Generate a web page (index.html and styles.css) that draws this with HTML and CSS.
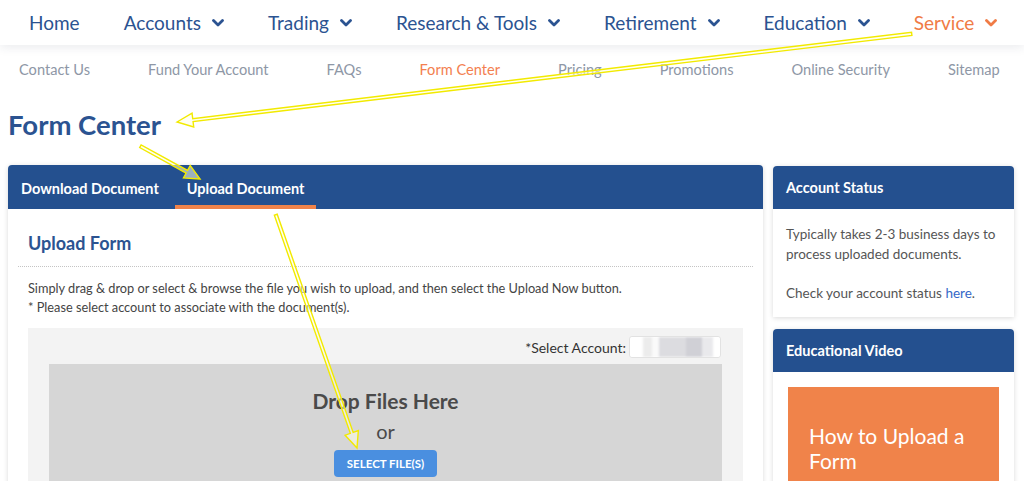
FILE: index.html
```html
<!DOCTYPE html>
<html lang="en">
<head>
    <meta charset="UTF-8">
    <meta name="viewport" content="width=device-width, initial-scale=1.0">
    <title>Form Center</title>
    <link rel="stylesheet" href="styles.css">
</head>
<body>

<header class="topnav">
    <ul>
        <li><a href="#">Home</a></li>
        <li><a href="#">Accounts <svg class="chev" viewBox="0 0 12 8"><path d="M1.5 1.5 6 6l4.5-4.5"/></svg></a></li>
        <li><a href="#">Trading <svg class="chev" viewBox="0 0 12 8"><path d="M1.5 1.5 6 6l4.5-4.5"/></svg></a></li>
        <li><a href="#">Research &amp; Tools <svg class="chev" viewBox="0 0 12 8"><path d="M1.5 1.5 6 6l4.5-4.5"/></svg></a></li>
        <li><a href="#">Retirement <svg class="chev" viewBox="0 0 12 8"><path d="M1.5 1.5 6 6l4.5-4.5"/></svg></a></li>
        <li><a href="#">Education <svg class="chev" viewBox="0 0 12 8"><path d="M1.5 1.5 6 6l4.5-4.5"/></svg></a></li>
        <li><a href="#" class="current">Service <svg class="chev" viewBox="0 0 12 8"><path d="M1.5 1.5 6 6l4.5-4.5"/></svg></a></li>
    </ul>
</header>

<nav class="subnav">
    <a href="#">Contact Us</a>
    <a href="#">Fund Your Account</a>
    <a href="#">FAQs</a>
    <a href="#" class="current">Form Center</a>
    <a href="#">Pricing</a>
    <a href="#">Promotions</a>
    <a href="#">Online Security</a>
    <a href="#">Sitemap</a>
</nav>

<main class="page">
    <h1 class="title">Form Center</h1>

    <div class="layout">
        <section class="panel">
            <div class="tabs">
                <a href="#" class="tab">Download Document</a>
                <a href="#" class="tab active">Upload Document</a>
            </div>
            <div class="panel-body">
                <h2>Upload Form</h2>
                <p class="intro">Simply drag &amp; drop or select &amp; browse the file you wish to upload, and then select the Upload Now button.<br>
                * Please select account to associate with the document(s).</p>

                <div class="upload-box">
                    <div class="account-row">
                        <label>*Select Account:</label>
                        <div class="select"><span class="blur"></span></div>
                    </div>
                    <div class="dropzone">
                        <p class="drop-title">Drop Files Here</p>
                        <p class="drop-or">or</p>
                        <button class="select-btn">SELECT FILE(S)</button>
                    </div>
                </div>
            </div>
        </section>

        <aside class="sidebar">
            <div class="card first">
                <div class="card-head">Account Status</div>
                <div class="card-body">
                    <p>Typically takes 2-3 business days to process uploaded documents.</p>
                    <p>Check your account status <a href="#">here</a>.</p>
                </div>
            </div>
            <div class="card">
                <div class="card-head">Educational Video</div>
                <div class="card-body video">
                    <div class="video-box">How to Upload a Form</div>
                </div>
            </div>
        </aside>
    </div>
</main>

<!-- yellow note arrows drawn over the screenshot -->
<svg class="notes" width="1024" height="481" viewBox="0 0 1024 481">
    <g transform="translate(177,122) rotate(-6.84)">
        <path d="M0 0 16-7v5.5H740v3H16V7Z"/>
    </g>
    <g transform="translate(200,179) rotate(-151.2)">
        <path d="M0 0 15-7v5.5H68v3H15V7Z"/>
    </g>
    <g transform="translate(357,448) rotate(-109.2)">
        <path d="M0 0 16-7v5.5H247v3H16V7Z"/>
    </g>
</svg>

</body>
</html>
```

FILE: styles.css
```css
body {
    margin: 0;
    font-family: Lato, "Open Sans", sans-serif;
    color: #444;
    background: #fff;
    position: relative;
}
a {
    text-decoration: none;
}

/* top navigation */
.topnav {
    height: 45px;
    background: #fff;
    box-shadow: 0 2px 10px rgba(40, 50, 80, 0.1);
}
.topnav ul {
    display: flex;
    align-items: center;
    gap: 44px;
    height: 45px;
    margin: 0;
    padding: 0 0 0 29px;
    list-style: none;
}
.topnav a {
    display: flex;
    align-items: center;
    gap: 11px;
    font-size: 19px;
    color: #2b5391;
}
.topnav a.current {
    color: #f07b45;
}
.chev {
    width: 12px;
    height: 8px;
    fill: none;
    stroke: currentColor;
    stroke-width: 2.8;
    stroke-linecap: round;
    stroke-linejoin: round;
}

.subnav {
    display: flex;
    align-items: center;
    gap: 58px;
    height: 48px;
    padding-left: 19px;
}
.subnav a {
    font-size: 14.6px;
    color: #8e97a6;
}
.subnav a.current {
    color: #f3804f;
}

/* page */
.page {
    padding: 0 10px 0 8px;
}
.title {
    margin: 16px 0 24px;
    font-size: 27.5px;
    line-height: 32px;
    font-weight: 700;
    color: #2b5391;
}
.layout {
    display: grid;
    grid-template-columns: 755px 241px;
    gap: 10px;
    align-items: start;
}

.panel {
    background: #fff;
    border-radius: 4px 4px 0 0;
    box-shadow: 0 1px 5px rgba(0, 0, 0, 0.15);
}
.tabs {
    display: flex;
    gap: 4px;
    height: 44px;
    padding-left: 1px;
    background: #24508f;
    border-radius: 4px 4px 0 0;
}
.tab {
    display: flex;
    align-items: center;
    padding: 6px 12px 0;
    border-bottom: 4px solid transparent;
    font-size: 14.5px;
    font-weight: 700;
    color: #fff;
}
.tab.active {
    border-bottom-color: #f0834a;
}

.panel-body {
    padding: 0 10px 20px;
}
.panel-body h2 {
    margin: 0;
    padding: 23px 10px 12px;
    font-size: 18px;
    line-height: 22px;
    font-weight: 700;
    color: #2b5391;
    border-bottom: 1px dotted #c4c4c4;
}
.intro {
    margin: 12px 10px 0;
    font-size: 12.75px;
    line-height: 19px;
    color: #444;
}

.upload-box {
    margin: 11px 10px 0;
    padding: 8px 21px 0;
    background: #f3f3f3;
}
.account-row {
    display: flex;
    justify-content: flex-end;
    align-items: center;
    gap: 3px;
    height: 22px;
    padding-right: 1px;
}
.account-row label {
    font-size: 14px;
    color: #333;
}
.select {
    width: 90px;
    height: 20px;
    background: #fff;
    border: 1px solid #e2e2e2;
    border-radius: 3px;
    overflow: hidden;
}
.select .blur {
    display: block;
    height: 100%;
    background: linear-gradient(to right, #fff 0 14%, #ececec 14% 24%, #fafafa 24% 32%, #dcdce0 32% 62%, #d0d0d6 62% 80%, #e9e9ec 80% 92%, #fff 92%);
    filter: blur(1px);
}

.dropzone {
    margin-top: 6px;
    padding: 24px 0 30px;
    background: #d6d6d6;
    text-align: center;
}
.drop-title {
    margin: 0;
    font-size: 21px;
    line-height: 26px;
    font-weight: 700;
    color: #4a4a4a;
}
.drop-or {
    margin: 5px 0 0;
    font-size: 20px;
    line-height: 24px;
    color: #4a4a4a;
}
.select-btn {
    margin-top: 7px;
    height: 27px;
    padding: 0 13px;
    background: #4a8fe0;
    color: #fff;
    border: none;
    border-radius: 4px;
    font-family: inherit;
    font-size: 11.5px;
    font-weight: 700;
}

/* sidebar */
.card {
    margin-bottom: 12px;
    background: #fff;
    border-radius: 4px 4px 0 0;
    box-shadow: 0 1px 5px rgba(0, 0, 0, 0.15);
}
.card.first {
    margin-top: 1px;
}
.card-head {
    display: flex;
    align-items: center;
    height: 43px;
    padding-left: 13px;
    background: #24508f;
    border-radius: 4px 4px 0 0;
    font-size: 14.5px;
    font-weight: 700;
    color: #fff;
}
.card-body {
    padding: 15px 13px 14px;
    font-size: 13.5px;
    line-height: 20px;
    color: #555;
}
.card-body p {
    margin: 0 0 19px;
}
.card-body p:last-child {
    margin-bottom: 0;
}
.card-body a {
    color: #3467c8;
}
.card-body.video {
    padding: 15px 15px 20px;
}
.video-box {
    height: 140px;
    padding: 36px 21px 0;
    background: #f0834a;
    font-size: 21px;
    line-height: 25px;
    color: #fff;
}

/* annotation overlay */
.notes {
    position: absolute;
    top: 0;
    left: 0;
    pointer-events: none;
}
.notes path {
    fill: rgba(255, 255, 230, 0.55);
    stroke: #f2ea00;
    stroke-width: 1.4;
    stroke-linejoin: miter;
}
```
